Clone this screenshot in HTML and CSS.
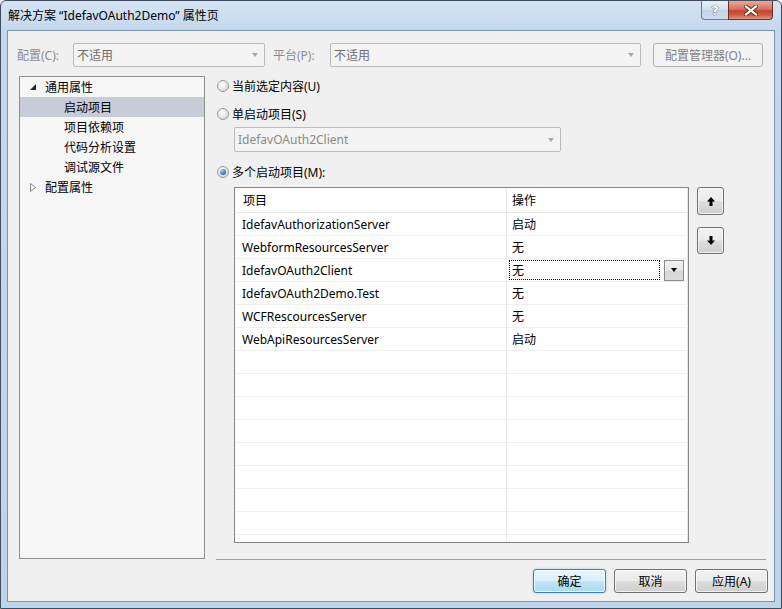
FILE: index.html
```html
<!DOCTYPE html>
<html lang="zh-CN">
<head>
<meta charset="utf-8">
<title>解决方案属性页</title>
<link rel="stylesheet" href="styles.css">
</head>
<body>
<div class="window">
  <div class="titlebar">
    <span class="title">解决方案 “IdefavOAuth2Demo” 属性页</span>
    <div class="caption-btns">
      <div class="cbtn help">?</div>
      <div class="cbtn close">
        <svg width="14" height="11" viewBox="0 0 14 11"><path d="M2 1.5 L12 9.5 M12 1.5 L2 9.5" stroke="#5a2b22" stroke-width="4" stroke-linecap="square"/><path d="M2 1.5 L12 9.5 M12 1.5 L2 9.5" stroke="#ffffff" stroke-width="2.2" stroke-linecap="square"/></svg>
      </div>
    </div>
  </div>
  <div class="client">
    <div class="toolbar">
      <span class="lbl lbl-cfg">配置(C):</span>
      <div class="combo combo-cfg"><span>不适用</span><i class="arrow"></i></div>
      <span class="lbl lbl-plat">平台(P):</span>
      <div class="combo combo-plat"><span>不适用</span><i class="arrow"></i></div>
      <div class="btn btn-disabled btn-cfgmgr">配置管理器(O)...</div>
    </div>
    <div class="main">
      <div class="tree">
        <div class="node">
          <svg class="exp" width="7" height="7" viewBox="0 0 7 7"><polygon points="6,0 6,6 0,6" fill="#262626"/></svg>
          <span>通用属性</span>
        </div>
        <div class="node child selected"><span>启动项目</span></div>
        <div class="node child"><span>项目依赖项</span></div>
        <div class="node child"><span>代码分析设置</span></div>
        <div class="node child"><span>调试源文件</span></div>
        <div class="node">
          <svg class="exp" width="7" height="9" viewBox="0 0 7 9"><polygon points="0.5,0.5 5.5,4.5 0.5,8.5" fill="none" stroke="#8c8c8c" stroke-width="1"/></svg>
          <span>配置属性</span>
        </div>
      </div>
      <div class="page">
        <div class="radio-row r1"><i class="radio"></i><span>当前选定内容(U)</span></div>
        <div class="radio-row r2"><i class="radio"></i><span>单启动项目(S)</span></div>
        <div class="combo combo-single"><span>IdefavOAuth2Client</span><i class="arrow"></i></div>
        <div class="radio-row r3"><i class="radio checked"></i><span>多个启动项目(M):</span></div>
        <div class="grid-area">
          <div class="grid">
            <div class="row head"><div class="c1">项目</div><div class="c2">操作</div></div>
            <div class="row"><div class="c1">IdefavAuthorizationServer</div><div class="c2">启动</div></div>
            <div class="row"><div class="c1">WebformResourcesServer</div><div class="c2">无</div></div>
            <div class="row"><div class="c1">IdefavOAuth2Client</div><div class="c2 editing"><div class="focusbox">无</div><div class="dropbtn"><i class="darrow"></i></div></div></div>
            <div class="row"><div class="c1">IdefavOAuth2Demo.Test</div><div class="c2">无</div></div>
            <div class="row"><div class="c1">WCFRescourcesServer</div><div class="c2">无</div></div>
            <div class="row"><div class="c1">WebApiResourcesServer</div><div class="c2">启动</div></div>
            <div class="row"><div class="c1"></div><div class="c2"></div></div>
            <div class="row"><div class="c1"></div><div class="c2"></div></div>
            <div class="row"><div class="c1"></div><div class="c2"></div></div>
            <div class="row"><div class="c1"></div><div class="c2"></div></div>
            <div class="row"><div class="c1"></div><div class="c2"></div></div>
            <div class="row"><div class="c1"></div><div class="c2"></div></div>
            <div class="row"><div class="c1"></div><div class="c2"></div></div>
            <div class="row"><div class="c1"></div><div class="c2"></div></div>
            <div class="row"><div class="c1"></div><div class="c2"></div></div>
          </div>
          <div class="side-btns">
            <div class="btn sbtn up"><svg width="8" height="9" viewBox="0 0 8 9"><polygon points="4,0 8,4.5 5.5,4.5 5.5,9 2.5,9 2.5,4.5 0,4.5" fill="#000"/></svg></div>
            <div class="btn sbtn down"><svg width="8" height="9" viewBox="0 0 8 9"><polygon points="4,9 8,4.5 5.5,4.5 5.5,0 2.5,0 2.5,4.5 0,4.5" fill="#000"/></svg></div>
          </div>
        </div>
        <div class="sep"></div>
      </div>
    </div>
    <div class="footer">
      <div class="btn btn-default">确定</div>
      <div class="btn">取消</div>
      <div class="btn">应用(A)</div>
    </div>
  </div>
</div>
</body>
</html>
```

FILE: styles.css
```css
* { box-sizing: border-box; }
html, body { margin: 0; padding: 0; }
body {
  width: 782px;
  height: 609px;
  overflow: hidden;
  font-family: "Noto Sans", "Noto Sans CJK SC", sans-serif;
  font-size: 12px;
  color: #000;
  background: #ffffff;
}
.window {
  width: 782px;
  height: 609px;
  border: 1px solid #3f4d5e;
  border-radius: 6px 6px 0 0;
  background: linear-gradient(to bottom, #d5e4f4 0px, #c3d8ee 30px, #bed4eb 100%);
  display: flex;
  flex-direction: column;
}
.titlebar {
  height: 29px;
  display: flex;
  align-items: center;
  padding-left: 7px;
  flex: none;
}
.title {
  font-size: 12px;
  line-height: 16px;
  margin-top: 1px;
  color: #000;
}
.caption-btns {
  margin-left: auto;
  margin-right: 8px;
  align-self: flex-start;
  display: flex;
}
.cbtn {
  height: 19px;
  display: flex;
  align-items: center;
  justify-content: center;
}
.help {
  width: 27px;
  border: 1px solid #6a7d95;
  border-top: none;
  border-right: none;
  border-radius: 0 0 0 4px;
  background: linear-gradient(to bottom, #e7eef7 0%, #d4e0ee 50%, #c3d3e6 51%, #cfdded 100%);
  color: #fff;
  font-family: "DejaVu Sans", sans-serif;
  font-weight: bold;
  font-size: 13px;
  text-shadow: 0 0 1px #3a4b63, 0 0 1px #3a4b63;
}
.close {
  width: 45px;
  border: 1px solid #6b3128;
  border-top: none;
  border-radius: 0 0 4px 0;
  background: linear-gradient(to bottom, #e9a99a 0%, #d9725e 45%, #c6412b 55%, #d25f45 80%, #e39a80 100%);
}

.client {
  margin-left: 6px;
  width: 768px;
  height: 572px;
  border: 1px solid #7c93ad;
  background: #f0f0f0;
  padding: 12px 0 0 9px;
  flex: none;
}
.toolbar {
  display: flex;
  align-items: center;
  height: 24px;
}
.lbl { color: #8d8d8d; white-space: nowrap; }
.lbl-cfg { width: 56px; }
.lbl-plat { width: 57px; margin-left: 8px; }
.combo {
  height: 24px;
  border: 1px solid #b9bcbf;
  border-radius: 2px;
  background: #f4f4f4;
  display: flex;
  align-items: center;
  padding-left: 3px;
  color: #6d6d6d;
}
.combo .arrow {
  margin-left: auto;
  margin-right: 6px;
  width: 0;
  height: 0;
  border-left: 3.5px solid transparent;
  border-right: 3.5px solid transparent;
  border-top: 4px solid #a8a8a8;
}
.combo-cfg { width: 192px; }
.combo-plat { width: 311px; }
.btn {
  height: 24px;
  border: 1px solid #707070;
  border-radius: 3px;
  background: linear-gradient(to bottom, #f2f2f2 0%, #ebebeb 48%, #dddddd 52%, #cfcfcf 100%);
  display: flex;
  align-items: center;
  justify-content: center;
  box-shadow: inset 0 0 0 1px rgba(255,255,255,0.7);
  white-space: nowrap;
}
.btn-disabled {
  border-color: #adb2b5;
  background: #f4f4f4;
  color: #838383;
  box-shadow: none;
}
.btn-cfgmgr { width: 110px; margin-left: 12px; }

.main {
  display: flex;
  margin-top: 9px;
  height: 484px;
}
.tree {
  margin-left: 2px;
  width: 186px;
  height: 483px;
  border: 1px solid #8e8f8f;
  background: #f6f6f6;
  padding-top: 0;
  flex: none;
}
.node {
  height: 20px;
  display: flex;
  align-items: center;
  padding-left: 10px;
  white-space: nowrap;
}
.node .exp { width: 7px; margin-right: 8px; flex: none; }
.node.child { padding-left: 44px; }
.node.selected { background: #c8cbd8; }

.page {
  margin-left: 11px;
  flex: 1;
  display: flex;
  flex-direction: column;
}
.radio-row {
  display: flex;
  align-items: center;
  height: 20px;
  padding-left: 1px;
}
.r2 { margin-top: 8px; }
.r3 { margin-top: 10px; }
.radio {
  width: 12px;
  height: 12px;
  border-radius: 50%;
  border: 1px solid #9a9a9a;
  background: radial-gradient(circle at 40% 35%, #ffffff 0%, #e8e8e8 50%, #cfcfcf 100%);
  margin-right: 3px;
  position: relative;
  flex: none;
}
.radio.checked::after {
  content: "";
  position: absolute;
  left: 2px;
  top: 2px;
  width: 6px;
  height: 6px;
  border-radius: 50%;
  background: radial-gradient(circle at 35% 30%, #a8d4f7 0%, #3b7fcb 55%, #1d4f95 100%);
}
.combo-single {
  width: 327px;
  height: 25px;
  margin: 3px 0 0 18px;
  color: #8a8a8a;
}
.grid-area {
  display: flex;
  margin: 5px 0 0 18px;
}
.grid {
  width: 455px;
  height: 356px;
  border: 1px solid #858585;
  background: #fff;
  overflow: hidden;
  flex: none;
}
.row {
  display: grid;
  grid-template-columns: 271px 181px;
  height: 23px;
  border-bottom: 1px solid #efefef;
  border-right: 1px solid #e6e6e6;
  width: 453px;
}
.row.head { height: 25px; border-bottom-color: #e5e5e5; }
.row > div {
  display: flex;
  align-items: center;
  white-space: nowrap;
}
.c1 { padding-left: 7px; }
.c2 { padding-left: 5px; border-left: 1px solid #ebebeb; }
.head .c1 { padding-left: 8px; }
.c2.editing { padding-left: 2px; }
.focusbox {
  width: 151px;
  height: 20px;
  border: 1px dotted #000;
  display: flex;
  align-items: center;
  padding-left: 2px;
}
.dropbtn {
  width: 20px;
  height: 21px;
  margin-left: 4px;
  border: 1px solid #8c8c8c;
  background: linear-gradient(to bottom, #f3f3f3 0%, #e6e6e6 50%, #d7d7d7 51%, #dcdcdc 100%);
  display: flex;
  align-items: center;
  justify-content: center;
}
.darrow {
  width: 0;
  height: 0;
  border-left: 3.5px solid transparent;
  border-right: 3.5px solid transparent;
  border-top: 4px solid #000;
}
.side-btns {
  margin-left: 8px;
  display: flex;
  flex-direction: column;
}
.sbtn { width: 27px; height: 28px; }
.sbtn.down { margin-top: 12px; height: 27px; }
.sep {
  margin-top: auto;
  margin-right: 8px;
  height: 1px;
  background: #a0a0a0;
}
.footer {
  display: flex;
  justify-content: flex-end;
  gap: 8px;
  margin-top: 9px;
  padding-right: 6px;
}
.footer .btn { width: 73px; }
.btn-default {
  border-color: #3c7fb1;
  background: linear-gradient(to bottom, #eaf6fd 0%, #d9f0fc 48%, #bee6fd 52%, #a7d9f5 100%);
  box-shadow: inset 0 0 0 1px rgba(255,255,255,0.8), 0 0 2px #7fc4ee;
}
```
